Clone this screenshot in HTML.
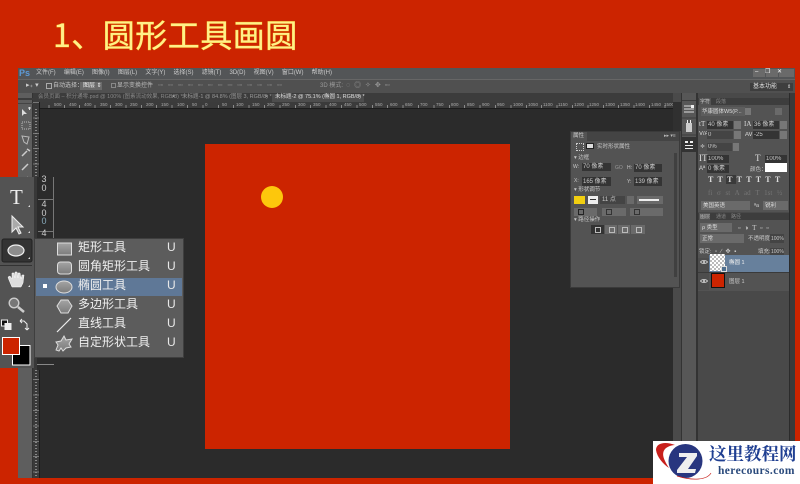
<!DOCTYPE html>
<html><head><meta charset="utf-8"><style>
html,body{margin:0;padding:0}
body{width:800px;height:484px;overflow:hidden;position:relative;background:#cc2400;font-family:"Liberation Sans","Noto Sans CJK SC",sans-serif}
div,span,svg{position:absolute}
.t{white-space:nowrap;font-size:6px;line-height:8px;color:#c8c8c8;filter:blur(.3px)}
.f{background:#343434}
.s{background:#6a6a6a}
.m{white-space:nowrap;font-size:12px;line-height:16px;color:#f0f0f0;left:78px}
.u{left:167px;font-size:12px;line-height:16px;color:#e8e8e8}
.r{font-size:4.5px;color:#aaa;line-height:6px;top:102px;white-space:nowrap;filter:blur(.3px)}
</style></head><body>
<div style="left:53px;top:14px;white-space:nowrap;font-size:32px;line-height:40px;color:#fff08a;-webkit-text-stroke:.6px #f2bd20;paint-order:stroke fill;letter-spacing:.5px;font-family:'Noto Sans CJK SC',sans-serif">1、<span style="position:static;margin-left:-1px">圆形工具画圆</span></div>

<!-- window -->
<div style="left:18px;top:68px;width:777px;height:410px;background:#2b2b2b"></div>
<div style="left:18px;top:68px;width:777px;height:11px;background:#535557"></div>
<div style="left:18px;top:79px;width:777px;height:14px;background:#505050;border-top:1px solid #666;box-sizing:border-box"></div>
<div style="left:18px;top:93px;width:777px;height:9px;background:#3c3c3c"></div>
<div class="t" style="left:19px;top:68px;font-size:9px;line-height:11px;color:#5d9ad6;font-weight:bold">Ps</div>
<div class="t" style="left:36px;top:69px;word-spacing:6.5px;color:#ccc">文件(F) 编辑(E) 图像(I) 图层(L) 文字(Y) 选择(S) 滤镜(T) 3D(D) 视图(V) 窗口(W) 帮助(H)</div>
<div style="left:753px;top:69px;width:12px;height:8px;background:#6a6a6a"></div>
<div style="left:766px;top:69px;width:12px;height:8px;background:#6a6a6a"></div>
<div style="left:779px;top:69px;width:15px;height:8px;background:#6a6a6a"></div>
<div class="t" style="left:755px;top:68px;color:#fff;word-spacing:5px">– ❐ ✕</div>
<!-- options -->
<div class="t" style="left:26px;top:82px;font-size:7px;color:#ccc">▸₊ ▾</div>
<div style="left:46px;top:83px;width:4px;height:4px;border:1px solid #aaa"></div>
<div class="t" style="left:53px;top:82px">自动选择：</div>
<div class="f" style="left:80px;top:82px;width:22px;height:8px;background:#6a6a6a"></div>
<div class="t" style="left:83px;top:82px;color:#eee">图层 ⇕</div>
<div style="left:111px;top:83px;width:3px;height:3px;border:1px solid #888"></div>
<div class="t" style="left:117px;top:82px;color:#bbb">显示变换控件</div>
<div class="t" style="left:158px;top:82px;color:#8a8a8a;word-spacing:3px;font-size:7px">▫▫ ▫▫ ▫▫ ▫▫ ▫▫ ▫▫ ▫▫ ▫▫ ▫▫ ▫▫ ▫▫ ▫▫ ▫▫</div>
<div class="t" style="left:320px;top:82px;color:#999">3D 模式:</div>
<div class="t" style="left:346px;top:82px;color:#999;word-spacing:2px;font-size:7px">◌ ◎ ✧ ✥ ▫▫</div>
<div style="left:750px;top:83px;width:43px;height:8px;background:#3e3e3e"></div>
<div class="t" style="left:753px;top:83px;color:#ddd">基本功能</div>
<div class="t" style="left:787px;top:83px;color:#ddd;font-size:5px">⇕</div>
<!-- tabs -->
<div class="t" style="left:38px;top:93px;color:#888;font-size:5.5px">会员页面 – 积分通零.psd @ 100% (图素流动效果, RGB/8) *</div>
<div class="t" style="left:172px;top:93px;color:#ccc;font-size:5px">×</div>
<div class="t" style="left:182px;top:93px;color:#999;font-size:5.5px">未标题-1 @ 84.8% (图层 3, RGB/8) *</div>
<div class="t" style="left:265px;top:93px;color:#ccc;font-size:5px">×</div>
<div style="left:272px;top:94px;width:92px;height:8px;background:#4d4d4d"></div>
<div class="t" style="left:275px;top:93px;color:#ddd;font-size:5.5px">未标题-2 @ 75.1% (椭圆 1, RGB/8) *</div>
<div class="t" style="left:358px;top:93px;color:#ccc;font-size:5px">×</div>
<!-- rulers -->
<div style="left:33px;top:102px;width:640px;height:6px;background:#3b3b3b;border-bottom:1px solid #1c1c1c;background-image:repeating-linear-gradient(90deg,#8a8a8a 0 1px,transparent 1px 15.4px);background-size:100% 3px;background-repeat:no-repeat;background-position:0 3px"></div>
<div class="r" style="left:54px">500</div><div class="r" style="left:69px">450</div><div class="r" style="left:84px">400</div><div class="r" style="left:100px">350</div><div class="r" style="left:115px">300</div><div class="r" style="left:130px">250</div><div class="r" style="left:146px">200</div><div class="r" style="left:161px">150</div><div class="r" style="left:177px">100</div><div class="r" style="left:192px">50</div><div class="r" style="left:205px">0</div><div class="r" style="left:222px">50</div><div class="r" style="left:236px">100</div><div class="r" style="left:252px">150</div><div class="r" style="left:267px">200</div><div class="r" style="left:282px">250</div><div class="r" style="left:298px">300</div><div class="r" style="left:313px">350</div><div class="r" style="left:329px">400</div><div class="r" style="left:344px">450</div><div class="r" style="left:359px">500</div><div class="r" style="left:375px">550</div><div class="r" style="left:390px">600</div><div class="r" style="left:405px">650</div><div class="r" style="left:420px">700</div><div class="r" style="left:436px">750</div><div class="r" style="left:451px">800</div><div class="r" style="left:467px">850</div><div class="r" style="left:482px">900</div><div class="r" style="left:497px">950</div><div class="r" style="left:513px">1000</div><div class="r" style="left:528px">1050</div><div class="r" style="left:543px">1100</div><div class="r" style="left:558px">1150</div><div class="r" style="left:574px">1200</div><div class="r" style="left:589px">1250</div><div class="r" style="left:605px">1300</div><div class="r" style="left:620px">1350</div><div class="r" style="left:635px">1400</div><div class="r" style="left:651px">1450</div><div class="r" style="left:664px">1500</div>
<div style="left:33px;top:102px;width:7px;height:376px;background:#3a3a3a;border-right:1px solid #1c1c1c;box-sizing:border-box;background-image:repeating-linear-gradient(180deg,#777 0 1px,transparent 1px 15.4px)"></div>
<div style="left:35px;top:109px;width:2px;height:369px;background-image:repeating-linear-gradient(180deg,#888 0 1px,transparent 1px 3px)"></div>
<!-- canvas -->
<div style="left:205px;top:144px;width:305px;height:305px;background:#cc2400"></div>
<div style="left:261px;top:186px;width:22px;height:22px;border-radius:50%;background:#fdc70c"></div>

<!-- small left toolbar -->
<div style="left:18px;top:93px;width:15px;height:385px;background:#5e5e5e;border-right:1px solid #333;box-sizing:border-box"></div>
<div style="left:18px;top:98px;width:15px;height:2px;background:#3c3c3c"></div>
<div style="left:18px;top:103px;width:15px;height:1px;background:#444"></div>
<svg style="left:18px;top:104px" width="15" height="80" viewBox="0 0 15 80"><path d="M4 5l0 7 2-2 3 0z" fill="#ddd"/><path d="M10 4h3M11.500 3v3" stroke="#ddd"/><rect x="4" y="18" width="8" height="7" fill="none" stroke="#bbb" stroke-dasharray="1 1"/><path d="M4 32l7 1-2 7-3-2z" fill="none" stroke="#bbb"/><path d="M4 52l5-5M9 45l3 2" stroke="#ccc" stroke-width="1.500"/><path d="M4 66l6-6" stroke="#ccc" stroke-width="1.500"/><path d="M4 79l6-6" stroke="#bbb" stroke-width="1.500"/></svg>

<!-- enlarged tool column -->
<div style="left:0;top:177px;width:34px;height:191px;background:#535353"></div>
<div style="left:0;top:173px;width:18px;height:4px;background:#cc2400"></div>
<div style="left:34px;top:177px;width:20px;height:61px;background:#2b2b2b"></div>
<div style="left:34px;top:177px;width:3px;height:191px;background:#383838"></div>
<div style="left:37px;top:358px;width:17px;height:12px;background:#2b2b2b"></div>
<div style="left:53px;top:177px;width:1px;height:61px;background:#777"></div>
<div style="left:38px;top:199px;width:16px;height:1px;background:#777"></div>
<div style="left:38px;top:231px;width:16px;height:1px;background:#777"></div>
<div style="left:37px;top:364px;width:17px;height:1px;background:#888"></div>
<div style="left:40px;top:175px;width:8px;font-size:9px;line-height:8.500px;color:#ccc;text-align:center">3<br>0</div>
<div style="left:40px;top:200px;width:8px;font-size:9px;line-height:8.500px;color:#ccc;text-align:center">4<br>0<br><span style="position:static;color:#8ab">0</span></div>
<div style="left:40px;top:229px;width:8px;font-size:9px;line-height:8.500px;color:#ccc;text-align:center">4</div>
<div style="left:10px;top:187px;font-family:'Liberation Serif',serif;font-size:21px;line-height:21px;color:#eee">T</div>
<svg style="left:0;top:177px" width="34" height="190" viewBox="0 0 34 190">
<path d="M28 30h2v-2zM28 56h2v-2zM28 110h2v-2z" fill="#ddd"/>
<path d="M12 39l0 16 4-4 3 6 2-1-3-6 5 0z" fill="#aaa" stroke="#eee"/>
<rect x="2" y="62" width="30" height="23" rx="2" fill="#333" stroke="#222"/>
<ellipse cx="16" cy="73.500" rx="8" ry="5.500" fill="#8d8d8d" stroke="#f0f0f0" stroke-width="1.200"/>
<path d="M28 82h2v-2z" fill="#ddd"/>
<path d="M0 88.500h32" stroke="#333"/>
<path d="M12 110l-3-7-1-3 2-1 2 3v-6h2l1 5v-6h2l1 6v-5h2l1 6 1-4h2l-1 8-2 4z" fill="#ddd" stroke="#fff" stroke-width=".5"/>
<circle cx="14" cy="126" r="4.800" fill="#777" stroke="#ccc" stroke-width="1.400"/>
<path d="M18 130l6 5" stroke="#ccc" stroke-width="2.500"/>
<rect x="1.500" y="143" width="6" height="6" fill="#111" stroke="#eee"/><rect x="5" y="146.500" width="6" height="6" fill="#eee" stroke="#eee"/>
<path d="M20 144h4l3 3v6M20 144l2-2M20 144l2 2M27 153l-2-2M27 153l2-2" fill="none" stroke="#eee"/>
<rect x="12.500" y="168.500" width="17.500" height="19.500" fill="#000" stroke="#fff"/>
<rect x="2.500" y="160.500" width="17" height="17" fill="#cc2400" stroke="#fff"/>
</svg>

<!-- flyout -->
<div style="left:34px;top:238px;width:150px;height:120px;background:#5c5c5c;border:1px solid #3f3f3f;box-sizing:border-box"></div>
<div style="left:36px;top:278px;width:146px;height:18px;background:#5f7897"></div>
<div style="left:43px;top:284px;width:4px;height:4px;background:#fff"></div>
<svg style="left:50px;top:238px" width="30" height="120" viewBox="0 0 30 120">
<defs><linearGradient id="g" x1="0" y1="0" x2="0" y2="1"><stop offset="0" stop-color="#a4a4a4"/><stop offset="1" stop-color="#7c7c7c"/></linearGradient></defs>
<rect x="7.500" y="5" width="14" height="12" fill="url(#g)" stroke="#ddd"/>
<rect x="7.500" y="24" width="14" height="12" rx="3" fill="url(#g)" stroke="#ddd"/>
<ellipse cx="14" cy="49" rx="8" ry="6" fill="url(#g)" stroke="#ddd"/>
<path d="M11 62h7l4 6-4 7h-7l-4-7z" fill="url(#g)" stroke="#ddd"/>
<path d="M7 94l14-14" stroke="#eee" stroke-width="1.200"/>
<path d="M6 112l2-5-2-3 5-1 3-5 2 4 6-1-3 5 2 3-5 1-3 3-2-3-2 3z" fill="url(#g)" stroke="#ddd"/>
</svg>
<div class="m" style="top:239px">矩形工具</div><div class="u" style="top:239px">U</div>
<div class="m" style="top:258px">圆角矩形工具</div><div class="u" style="top:258px">U</div>
<div class="m" style="top:277px">椭圆工具</div><div class="u" style="top:277px">U</div>
<div class="m" style="top:296px">多边形工具</div><div class="u" style="top:296px">U</div>
<div class="m" style="top:315px">直线工具</div><div class="u" style="top:315px">U</div>
<div class="m" style="top:334px">自定形状工具</div><div class="u" style="top:334px">U</div>

<!-- right dock strip (behind properties panel) -->
<div style="left:673px;top:93px;width:8px;height:385px;background:#4a4a4a"></div>
<div style="left:673px;top:102px;width:8px;height:29px;background:#303030"></div>

<!-- properties panel -->
<div style="left:570px;top:131px;width:110px;height:157px;background:#535353;border:1px solid #3a3a3a;box-sizing:border-box"></div>
<div style="left:571px;top:132px;width:108px;height:9px;background:#444"></div>
<div style="left:571px;top:132px;width:16px;height:9px;background:#535353"></div>
<div class="t" style="left:573px;top:132px;color:#ccc;font-size:5.500px">属性</div>
<div class="t" style="left:664px;top:132px;color:#bbb;font-size:5px">▸▸ ▾≡</div>
<div style="left:576px;top:143px;width:6px;height:6px;border:1px dotted #ccc"></div>
<div style="left:586px;top:143px;width:8px;height:6px;background:#ddd;border:1px solid #222;box-sizing:border-box"></div>
<div class="t" style="left:597px;top:143px;font-size:5.500px">实时形状属性</div>
<div class="t" style="left:574px;top:154px;font-size:5.500px">▾ 边框</div>
<div class="t" style="left:573px;top:163px;font-size:5px">W:</div><div class="f" style="left:582px;top:163px;width:29px;height:8px"></div><div class="t" style="left:583px;top:163px">70 像素</div>
<div class="t" style="left:615px;top:164px;font-size:5px;color:#999">GO</div>
<div class="t" style="left:627px;top:164px;font-size:5px">H:</div><div class="f" style="left:634px;top:164px;width:28px;height:8px"></div><div class="t" style="left:635px;top:164px">70 像素</div>
<div class="t" style="left:574px;top:177px;font-size:5px">X:</div><div class="f" style="left:582px;top:177px;width:29px;height:9px"></div><div class="t" style="left:583px;top:178px">165 像素</div>
<div class="t" style="left:627px;top:178px;font-size:5px">Y:</div><div class="f" style="left:634px;top:177px;width:28px;height:9px"></div><div class="t" style="left:635px;top:178px">139 像素</div>
<div class="t" style="left:574px;top:186px;font-size:5.500px">▾ 形状调节</div>
<div style="left:574px;top:196px;width:11px;height:8px;background:#f2cf10"></div>
<div style="left:588px;top:196px;width:10px;height:8px;background:#eee"></div>
<div style="left:590px;top:199px;width:6px;height:1px;background:#333"></div>
<div class="f" style="left:600px;top:196px;width:25px;height:8px;background:#444"></div><div class="t" style="left:602px;top:196px">11 点</div>
<div class="s" style="left:627px;top:196px;width:7px;height:8px"></div>
<div class="s" style="left:637px;top:196px;width:26px;height:8px"></div><div style="left:639px;top:199px;width:20px;height:2px;background:#eee"></div>
<div class="s" style="left:574px;top:208px;width:23px;height:8px"></div>
<div class="s" style="left:602px;top:208px;width:24px;height:8px"></div>
<div class="s" style="left:630px;top:208px;width:33px;height:8px"></div>
<div style="left:578px;top:209px;width:4px;height:4px;border:1px solid #222"></div>
<div style="left:606px;top:209px;width:4px;height:4px;border:1px solid #333"></div>
<div style="left:634px;top:209px;width:4px;height:4px;border:1px solid #333"></div>
<div class="t" style="left:574px;top:216px;font-size:5.500px">▾ 路径操作</div>
<div style="left:591px;top:225px;width:13px;height:9px;background:#333"></div>
<div class="s" style="left:605px;top:225px;width:12px;height:9px"></div>
<div class="s" style="left:618px;top:225px;width:12px;height:9px"></div>
<div class="s" style="left:631px;top:225px;width:14px;height:9px"></div>
<div style="left:595px;top:227px;width:4px;height:4px;border:1px solid #bbb"></div>
<div style="left:609px;top:227px;width:4px;height:4px;border:1px solid #bbb"></div>
<div style="left:622px;top:227px;width:4px;height:4px;border:1px solid #bbb"></div>
<div style="left:636px;top:227px;width:4px;height:4px;border:1px solid #bbb"></div>
<div style="left:674px;top:153px;width:3px;height:124px;background:#404040"></div>

<!-- right dock -->
<div style="left:681px;top:93px;width:15px;height:385px;background:#575757;border-left:1px solid #333;box-sizing:border-box"></div>
<div style="left:682px;top:100px;width:14px;height:1px;background:#3c3c3c"></div>
<svg style="left:682px;top:101px" width="14" height="52" viewBox="0 0 14 52"><path d="M2 5h10M2 8h10M2 11h10" stroke="#ddd"/><rect x="9" y="4" width="3" height="3" fill="#eee"/><path d="M0 17h14M0 34h14" stroke="#3d3d3d"/><path d="M4 22h6v9H4z" fill="#ccc"/><path d="M5 19h1v3H5zM8 19h1v3H8z" fill="#eee"/><rect x="0" y="36" width="14" height="15" fill="#333"/><path d="M3 40h3v2H3zM8 40h3v2H8zM3 44h8v1H3zM3 47h8v1H3z" fill="#eee"/></svg>
<div style="left:696px;top:93px;width:99px;height:385px;background:#494949"></div>
<div style="left:696px;top:93px;width:2px;height:385px;background:#333"></div>
<div style="left:789px;top:93px;width:6px;height:385px;background:#3a3a3a"></div>
<div style="left:789px;top:93px;width:1px;height:385px;background:#2b2b2b"></div>
<!-- char panel -->
<div style="left:698px;top:98px;width:91px;height:114px;background:#535353"></div>
<div style="left:698px;top:98px;width:91px;height:7px;background:#3d3d3d"></div>
<div style="left:699px;top:98px;width:12px;height:7px;background:#535353"></div>
<div class="t" style="left:700px;top:98px;font-size:5px">字符</div><div class="t" style="left:716px;top:98px;font-size:5px;color:#888">段落</div>
<div class="s" style="left:701px;top:107px;width:44px;height:9px;background:#5d5d5d"></div>
<div class="t" style="left:702px;top:108px;font-size:5.500px;color:#ddd">华康圆体W5(P...</div>
<div class="s" style="left:745px;top:108px;width:6px;height:7px;background:#777"></div>
<div class="s" style="left:775px;top:108px;width:7px;height:7px"></div>
<div class="t" style="left:699px;top:120px;font-size:7px;color:#ddd;font-family:'Liberation Serif',serif">tT</div>
<div class="f" style="left:707px;top:121px;width:26px;height:8px"></div><div class="t" style="left:708px;top:121px">40 像素</div>
<div class="s" style="left:734px;top:121px;width:7px;height:8px;background:#777"></div>
<div class="t" style="left:744px;top:120px;font-size:7px;color:#ddd;font-family:'Liberation Serif',serif">IA</div>
<div class="f" style="left:753px;top:121px;width:26px;height:8px"></div><div class="t" style="left:754px;top:121px">36 像素</div>
<div class="s" style="left:780px;top:121px;width:7px;height:8px;background:#777"></div>
<div class="t" style="left:699px;top:130px;font-size:6px;color:#ddd">V/A</div>
<div class="f" style="left:707px;top:131px;width:26px;height:8px;background:#444"></div><div class="t" style="left:708px;top:131px">0</div>
<div class="s" style="left:734px;top:131px;width:7px;height:8px;background:#777"></div>
<div class="t" style="left:745px;top:131px;font-size:6px;color:#ddd">AV</div>
<div class="f" style="left:753px;top:131px;width:26px;height:8px"></div><div class="t" style="left:754px;top:131px">-25</div>
<div class="s" style="left:780px;top:131px;width:7px;height:8px;background:#777"></div>
<div class="t" style="left:700px;top:143px;font-size:6px;color:#ccc">≑</div>
<div class="f" style="left:707px;top:143px;width:25px;height:8px;background:#444"></div><div class="t" style="left:708px;top:143px">0%</div>
<div class="s" style="left:733px;top:143px;width:6px;height:8px;background:#777"></div>
<div class="t" style="left:699px;top:154px;font-size:9px;color:#ddd;font-family:'Liberation Serif',serif">IT</div>
<div class="f" style="left:707px;top:155px;width:22px;height:8px"></div><div class="t" style="left:708px;top:155px">100%</div>
<div class="t" style="left:755px;top:154px;font-size:9px;color:#ddd;font-family:'Liberation Serif',serif">T</div>
<div class="f" style="left:765px;top:155px;width:22px;height:8px"></div><div class="t" style="left:766px;top:155px">100%</div>
<div class="t" style="left:699px;top:165px;font-size:6px;color:#ddd">Aª</div>
<div class="f" style="left:707px;top:165px;width:22px;height:8px"></div><div class="t" style="left:708px;top:165px">0 像素</div>
<div class="t" style="left:750px;top:166px;font-size:5.500px">颜色：</div>
<div style="left:765px;top:163px;width:22px;height:9px;background:#fff"></div>
<div style="left:726px;top:175px;width:10px;height:9px;background:#3a3a3a"></div>
<div class="t" style="left:708px;top:175px;font-size:8px;line-height:9px;word-spacing:2.500px;color:#ddd;font-family:'Liberation Serif',serif;font-weight:bold">T T T T T T T T</div>
<div class="t" style="left:708px;top:189px;font-size:7px;line-height:9px;word-spacing:3px;color:#757575;font-family:'Liberation Serif',serif">fi σ st A ad T 1st ½</div>
<div class="s" style="left:701px;top:201px;width:49px;height:9px"></div><div class="t" style="left:703px;top:202px;color:#ddd;font-size:5.500px">美国英语</div>
<div class="t" style="left:754px;top:202px;color:#ccc;font-size:5.500px">ªa</div>
<div class="s" style="left:763px;top:201px;width:25px;height:9px"></div><div class="t" style="left:765px;top:202px;color:#ddd;font-size:5.500px">锐利</div>
<!-- layers panel -->
<div style="left:698px;top:213px;width:91px;height:78px;background:#535353"></div>
<div style="left:698px;top:213px;width:91px;height:7px;background:#3d3d3d"></div>
<div style="left:699px;top:213px;width:11px;height:7px;background:#535353"></div>
<div class="t" style="left:700px;top:213px;font-size:5px">图层</div><div class="t" style="left:716px;top:213px;font-size:5px;color:#888">通道</div><div class="t" style="left:731px;top:213px;font-size:5px;color:#888">路径</div>
<div class="s" style="left:700px;top:223px;width:32px;height:9px"></div><div class="t" style="left:702px;top:224px;color:#ddd;font-size:5.500px">ρ 类型</div>
<div class="t" style="left:738px;top:224px;color:#ccc;font-size:7px;word-spacing:2px;font-family:'Liberation Serif',serif">▫ ◑ T ▫ ▫</div>
<div class="s" style="left:700px;top:234px;width:44px;height:9px"></div><div class="t" style="left:702px;top:235px;color:#ddd;font-size:5.500px">正常</div>
<div class="t" style="left:748px;top:235px;font-size:5.500px">不透明度:</div>
<div class="f" style="left:770px;top:234px;width:14px;height:9px;background:#444"></div><div class="t" style="left:771px;top:235px;font-size:5px">100%</div>
<div class="t" style="left:699px;top:248px;font-size:5.500px">锁定:</div>
<div class="t" style="left:715px;top:248px;font-size:6px;word-spacing:2px;color:#ccc">▫ ∕ ✥ ▪</div>
<div class="t" style="left:758px;top:248px;font-size:5.500px">填充:</div>
<div class="f" style="left:770px;top:248px;width:14px;height:8px;background:#444"></div><div class="t" style="left:771px;top:248px;font-size:5px">100%</div>
<div style="left:698px;top:258px;width:11px;height:32px;background:#4d4d4d"></div>
<div style="left:709px;top:255px;width:80px;height:17px;background:#67809c"></div>
<div style="left:710px;top:254px;width:15px;height:17px;background:#eee;background-image:repeating-conic-gradient(#bbb 0 25%,#fff 0 50%);background-size:4px 4px"></div>
<div style="left:721px;top:266px;width:6px;height:6px;background:#4f6f8f;border:1px solid #ddd;box-sizing:border-box"></div>
<div class="t" style="left:729px;top:259px;font-size:5.500px;color:#eee">椭圆 1</div>
<svg style="left:700px;top:259px" width="8" height="6"><path d="M.5 3C2 1 6 1 7.500 3 6 5 2 5 .5 3z" fill="none" stroke="#ddd" stroke-width=".8"/><circle cx="4" cy="3" r="1" fill="#ddd"/></svg>
<div style="left:698px;top:272px;width:91px;height:1px;background:#3a3a3a"></div>
<div style="left:711px;top:273px;width:14px;height:15px;background:#cc2400;border:1px solid #111;box-sizing:border-box"></div>
<div class="t" style="left:729px;top:278px;font-size:5.500px;color:#ccc">图层 1</div>
<svg style="left:700px;top:278px" width="8" height="6"><path d="M.5 3C2 1 6 1 7.500 3 6 5 2 5 .5 3z" fill="none" stroke="#ddd" stroke-width=".8"/><circle cx="4" cy="3" r="1" fill="#ddd"/></svg>

<!-- logo -->
<div style="left:653px;top:441px;width:147px;height:43px;background:#fff"></div>
<svg style="left:653px;top:441px" width="70" height="43" viewBox="0 0 70 43">
<circle cx="32.500" cy="20" r="17" fill="#28367f"/>
<path d="M22 4C12 0 3 2 3 9c1 7 7 14 13 18C11 19 8 13 12 8c2-2 6-4 10-4z" fill="#c8201c"/>
<path d="M58 32C54 39 40 40 24 35" fill="none" stroke="#c8201c" stroke-width=".7"/>
<path d="M26 12h18v3L35 28h8l-1 4H24v-3l10-13h-8z" fill="#eee"/>
</svg>
<div style="left:709px;top:443px;white-space:nowrap;font-family:'Noto Serif CJK SC',serif;font-weight:bold;font-size:17.500px;line-height:22px;color:#1f3f92">这里教程网</div>
<div style="left:718px;top:465px;white-space:nowrap;font-family:'Liberation Serif',serif;font-weight:bold;font-size:11.500px;line-height:13px;color:#2a4a7c;letter-spacing:.4px">herecours.com</div>
</body></html>
